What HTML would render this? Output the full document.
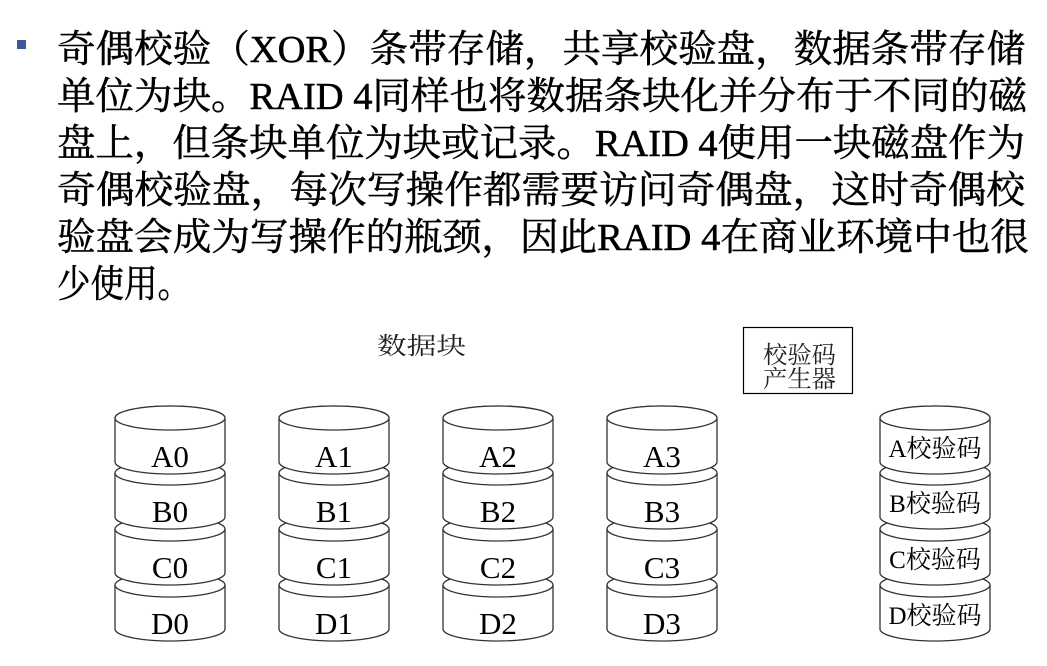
<!DOCTYPE html>
<html><head><meta charset="utf-8"><style>
body{margin:0;background:#fff;width:1047px;height:666px;overflow:hidden}
svg{display:block}
.t{font-family:"Liberation Serif","Noto Serif CJK SC",serif;font-size:38px;fill:#000;stroke:#000;stroke-width:0.5}
.l{font-family:"Liberation Serif","Noto Serif CJK SC",serif;font-size:31px;fill:#000}
.p{font-family:"Liberation Serif","Noto Serif CJK SC",serif;font-size:25px;fill:#000}
.s{font-family:"Noto Serif CJK SC",serif;font-size:24px;fill:#222}
</style></head><body>
<svg width="1047" height="666" viewBox="0 0 1047 666">
<rect x="17" y="40" width="9" height="9" fill="#3b5a9a"/>
<text class="t" x="57" y="62" textLength="968" lengthAdjust="spacingAndGlyphs">奇偶校验（XOR）条带存储，共享校验盘，数据条带存储</text>
<text class="t" x="57" y="109" textLength="970" lengthAdjust="spacingAndGlyphs">单位为块。RAID 4同样也将数据条块化并分布于不同的磁</text>
<text class="t" x="57" y="156" textLength="968" lengthAdjust="spacingAndGlyphs">盘上，但条块单位为块或记录。RAID 4使用一块磁盘作为</text>
<text class="t" x="57" y="203" textLength="968" lengthAdjust="spacingAndGlyphs">奇偶校验盘，每次写操作都需要访问奇偶盘，这时奇偶校</text>
<text class="t" x="57" y="250" textLength="972" lengthAdjust="spacingAndGlyphs">验盘会成为写操作的瓶颈，因此RAID 4在商业环境中也很</text>
<text class="t" x="57" y="297" textLength="134" lengthAdjust="spacingAndGlyphs">少使用。</text>
<text class="s" x="377" y="354" textLength="89" lengthAdjust="spacingAndGlyphs">数据块</text>
<rect x="743.5" y="327.5" width="109" height="66" fill="none" stroke="#000" stroke-width="1.2"/>
<text class="s" x="763" y="363" textLength="73" lengthAdjust="spacingAndGlyphs">校验码</text>
<text class="s" x="763" y="387" textLength="73" lengthAdjust="spacingAndGlyphs">产生器</text>
<script>
var svg=document.querySelector('svg'),ns='http://www.w3.org/2000/svg';
function el(t,a,txt){var e=document.createElementNS(ns,t);for(var k in a)e.setAttribute(k,a[k]);if(txt)e.textContent=txt;svg.appendChild(e);return e;}
function stack(x,w,labels,cls,dy){
 var tops=[418,473,529,585],rx=w/2,ry=12,h=44;
 for(var i=3;i>=0;i--){
  var t=tops[i],b=t+h;
  el('path',{d:'M'+x+','+t+' L'+x+','+b+' A'+rx+','+ry+' 0 0 0 '+(x+w)+','+b+' L'+(x+w)+','+t+' A'+rx+','+ry+' 0 0 0 '+x+','+t+' Z',fill:'#fff',stroke:'#333','stroke-width':1.3});
  if(i==0) el('ellipse',{cx:x+rx,cy:t,rx:rx,ry:ry,fill:'#fff',stroke:'#333','stroke-width':1.3});
  else el('path',{d:'M'+x+','+t+' A'+rx+','+ry+' 0 0 0 '+(x+w)+','+t,fill:'none',stroke:'#333','stroke-width':1.3});
  el('text',{'class':cls,x:x+rx,y:t+dy,'text-anchor':'middle'},labels[i]);
 }
}
var L='ABCD';
[115,279,443,607].forEach(function(x,j){stack(x,110,[0,1,2,3].map(function(i){return L[i]+j}),'l',49);});
stack(880,110,['A校验码','B校验码','C校验码','D校验码'],'p',39);
</script>
</svg>
</body></html>
